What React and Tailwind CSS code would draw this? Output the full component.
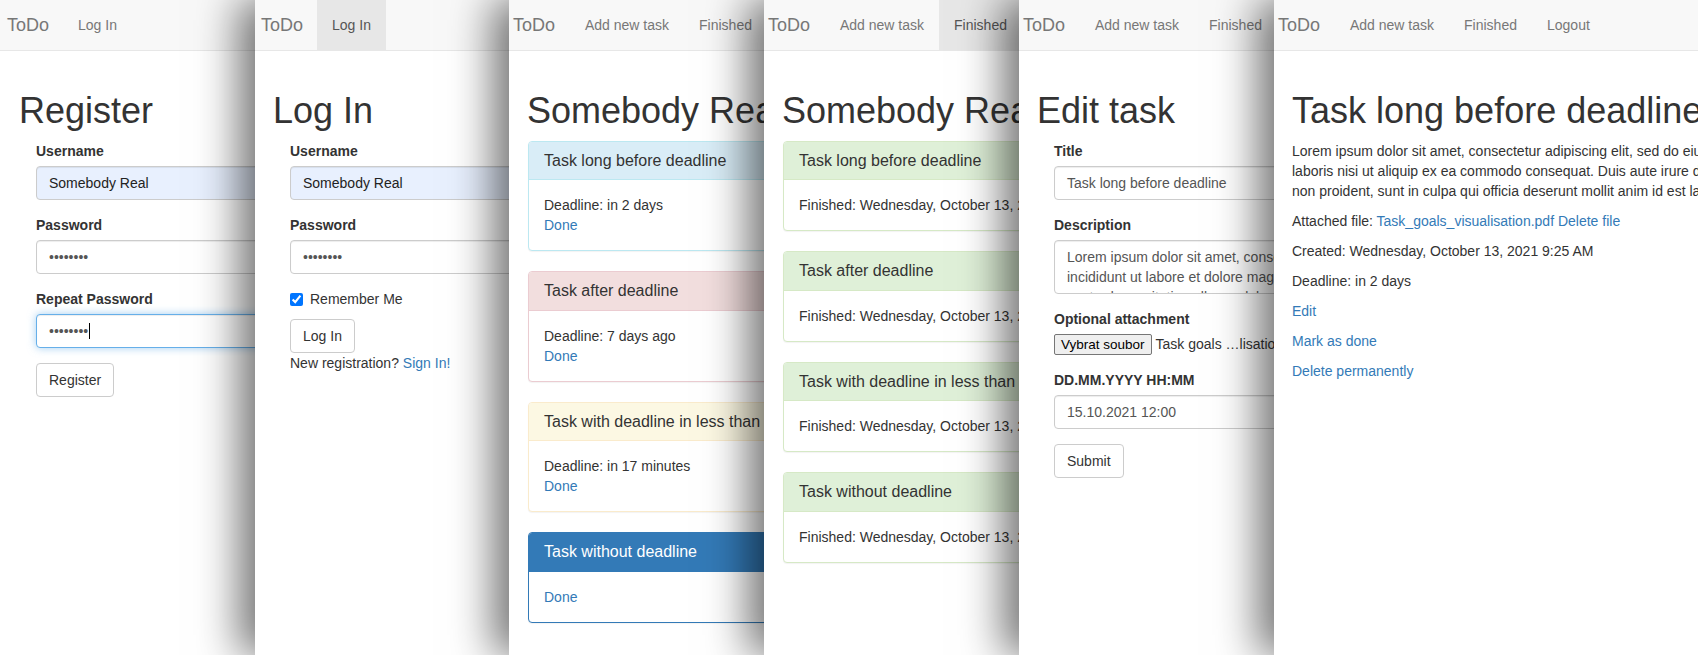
import { useState } from "react";

const shadow = "shadow-[-16px_0_40px_rgba(0,0,0,0.55)]";

const variants = {
  info: { box: "border-[#bce8f1]", head: "bg-[#d9edf7] border-[#bce8f1] text-[#333]" },
  danger: { box: "border-[#ebccd1]", head: "bg-[#f2dede] border-[#ebccd1] text-[#333]" },
  warning: { box: "border-[#faebcc]", head: "bg-[#fcf8e3] border-[#faebcc] text-[#333]" },
  primary: { box: "border-[#337ab7]", head: "bg-[#337ab7] border-[#337ab7] text-white" },
  success: { box: "border-[#d6e9c6]", head: "bg-[#dff0d8] border-[#d6e9c6] text-[#333]" },
};

function Navbar({ items, active, brand }) {
  return (
    <div className="flex h-[51px] w-[1100px] shrink-0 border-b border-[#e7e7e7] bg-[#f8f8f8] whitespace-nowrap">
      <div className={`${brand} shrink-0 pt-[15px] text-[18px] leading-5 text-[#777]`}>ToDo</div>
      {items.map((item) => (
        <div
          key={item}
          className={`px-[15px] pt-[15px] text-sm leading-5 ${
            item === active ? "bg-[#e7e7e7] text-[#555]" : "text-[#777]"
          }`}
        >
          {item}
        </div>
      ))}
    </div>
  );
}

function Panel({ width, first, children }) {
  return (
    <div className={`relative h-[655px] shrink-0 overflow-hidden bg-white ${width} ${first ? "" : shadow}`}>
      {children}
    </div>
  );
}

function Heading({ children }) {
  return (
    <h1 className="mb-[10px] whitespace-nowrap text-[36px] leading-[1.1] font-normal text-[#333]">{children}</h1>
  );
}

function Label({ children }) {
  return <div className="mb-[5px] text-sm leading-5 font-bold text-[#333] whitespace-nowrap">{children}</div>;
}

function Input({ children, tone = "plain" }) {
  const tones = {
    plain: "bg-white border-[#ccc] text-[#555] shadow-[inset_0_1px_1px_rgba(0,0,0,0.075)]",
    fill: "bg-[#e8f0fe] border-[#ccc] text-[#222] shadow-[inset_0_1px_1px_rgba(0,0,0,0.075)]",
    focus:
      "bg-white border-[#66afe9] text-[#555] shadow-[inset_0_1px_1px_rgba(0,0,0,0.075),0_0_8px_rgba(102,175,233,0.6)]",
  };
  return (
    <div className={`flex h-[34px] w-[700px] items-center rounded border px-3 text-sm whitespace-nowrap ${tones[tone]}`}>
      {children}
    </div>
  );
}

function Button({ children }) {
  return (
    <div className="inline-block rounded border border-[#ccc] bg-white px-3 py-[6px] text-sm leading-5 text-[#333]">
      {children}
    </div>
  );
}

function Card({ title, variant, children }) {
  const v = variants[variant];
  return (
    <div className={`mb-5 ml-[1px] w-[700px] rounded border bg-white shadow-[0_1px_1px_rgba(0,0,0,0.05)] ${v.box}`}>
      <div className={`rounded-t-[3px] border-b px-[15px] py-[10px] text-base leading-[1.1] whitespace-nowrap ${v.head}`}>
        {title}
      </div>
      <div className="p-[15px] text-sm leading-5 text-[#333] whitespace-nowrap">{children}</div>
    </div>
  );
}

const link = "text-[#337ab7]";
const dots = "••••••••";
const taskNav = ["Add new task", "Finished"];
const finished = "Finished: Wednesday, October 13, 2021 9:31 AM";

export default function App() {
  const [remember] = useState(true);
  return (
    <div className='flex h-[655px] w-[1698px] overflow-hidden bg-white font-["Liberation_Sans",Arial,sans-serif] text-[#333]'>
      <Panel width="w-[255px]" first>
        <Navbar items={["Log In"]} brand="pl-[7px] w-[63px]" />
        <div className="pl-[19px] pt-[40px]">
          <Heading>Register</Heading>
          <div className="pl-[17px]">
            <Label>Username</Label>
            <Input tone="fill">Somebody Real</Input>
            <div className="mt-[15px]">
              <Label>Password</Label>
              <Input>{dots}</Input>
            </div>
            <div className="mt-[15px]">
              <Label>Repeat Password</Label>
              <Input tone="focus">
                {dots}
                <span className="ml-[1px] inline-block h-[16px] w-px bg-black" />
              </Input>
            </div>
            <div className="mt-[15px]">
              <Button>Register</Button>
            </div>
          </div>
        </div>
      </Panel>

      <Panel width="w-[254px]">
        <Navbar items={["Log In"]} active="Log In" brand="pl-[6px] w-[62px]" />
        <div className="pl-[18px] pt-[40px]">
          <Heading>Log In</Heading>
          <div className="pl-[17px]">
            <Label>Username</Label>
            <Input tone="fill">Somebody Real</Input>
            <div className="mt-[15px]">
              <Label>Password</Label>
              <Input>{dots}</Input>
            </div>
            <div className="mt-[15px] flex h-5 text-sm leading-5 whitespace-nowrap">
              <input
                type="checkbox"
                defaultChecked={remember}
                className="m-0 mt-[4px] mr-[7px] h-[13px] w-[13px] accent-[#0075ff]"
              />
              Remember Me
            </div>
            <div className="mt-[10px]">
              <Button>Log In</Button>
            </div>
            <div className="text-sm leading-5 whitespace-nowrap">
              New registration? <span className={link}>Sign In!</span>
            </div>
          </div>
        </div>
      </Panel>

      <Panel width="w-[255px]">
        <Navbar items={taskNav} brand="pl-[4px] w-[61px]" />
        <div className="pl-[18px] pt-[40px]">
          <Heading>Somebody Real</Heading>
          <Card title="Task long before deadline" variant="info">
            <div>Deadline: in 2 days</div>
            <div className={link}>Done</div>
          </Card>
          <Card title="Task after deadline" variant="danger">
            <div>Deadline: 7 days ago</div>
            <div className={link}>Done</div>
          </Card>
          <Card title="Task with deadline in less than an hour" variant="warning">
            <div>Deadline: in 17 minutes</div>
            <div className={link}>Done</div>
          </Card>
          <Card title="Task without deadline" variant="primary">
            <div className={link}>Done</div>
          </Card>
        </div>
      </Panel>

      <Panel width="w-[255px]">
        <Navbar items={taskNav} active="Finished" brand="pl-[4px] w-[61px]" />
        <div className="pl-[18px] pt-[40px]">
          <Heading>Somebody Real</Heading>
          <Card title="Task long before deadline" variant="success">{finished}</Card>
          <Card title="Task after deadline" variant="success">{finished}</Card>
          <Card title="Task with deadline in less than an hour" variant="success">{finished}</Card>
          <Card title="Task without deadline" variant="success">{finished}</Card>
        </div>
      </Panel>

      <Panel width="w-[255px]">
        <Navbar items={taskNav} brand="pl-[4px] w-[61px]" />
        <div className="pl-[18px] pt-[40px]">
          <Heading>Edit task</Heading>
          <div className="pl-[17px]">
            <Label>Title</Label>
            <Input>Task long before deadline</Input>
            <div className="mt-[15px]">
              <Label>Description</Label>
              <div className="h-[54px] w-[700px] overflow-hidden rounded border border-[#ccc] px-3 py-[6px] text-sm leading-5 whitespace-nowrap text-[#555] shadow-[inset_0_1px_1px_rgba(0,0,0,0.075)]">
                <div>Lorem ipsum dolor sit amet, consectetur adipiscing elit, sed do eiusmod tempor</div>
                <div>incididunt ut labore et dolore magna aliqua. Ut enim ad minim veniam, quis</div>
                <div>nostrud exercitation ullamco laboris nisi ut aliquip ex ea commodo</div>
              </div>
            </div>
            <div className="mt-[15px]">
              <Label>Optional attachment</Label>
              <div className="flex h-[21px] items-center whitespace-nowrap text-[#333]">
                <div className="h-[21px] rounded-[2px] border border-[#767676] bg-[#efefef] px-[6px] text-[13.5px] leading-[19px] text-black">
                  Vybrat soubor
                </div>
                <span className="ml-[4px] text-sm">Task goals …lisation.pdf</span>
              </div>
            </div>
            <div className="mt-[15px]">
              <Label>DD.MM.YYYY HH:MM</Label>
              <Input>15.10.2021 12:00</Input>
            </div>
            <div className="mt-[15px]">
              <Button>Submit</Button>
            </div>
          </div>
        </div>
      </Panel>

      <Panel width="flex-1">
        <Navbar items={[...taskNav, "Logout"]} brand="pl-[4px] w-[61px]" />
        <div className="pl-[18px] pt-[40px] text-sm leading-5 whitespace-nowrap">
          <Heading>Task long before deadline</Heading>
          <div className="mb-[10px]">
            <div>
              Lorem ipsum dolor sit amet, consectetur adipiscing elit, sed do eiusmod tempor incididunt ut labore et
              dolore magna aliqua. Ut enim ad minim veniam, quis nostrud exercitation ullamco
            </div>
            <div>
              laboris nisi ut aliquip ex ea commodo consequat. Duis aute irure dolor in reprehenderit in voluptate velit
              esse cillum dolore eu fugiat nulla pariatur.
            </div>
            <div>non proident, sunt in culpa qui officia deserunt mollit anim id est laborum.</div>
          </div>
          <div className="mb-[10px]">
            Attached file: <span className={link}>Task_goals_visualisation.pdf</span>{" "}
            <span className={link}>Delete file</span>
          </div>
          <div className="mb-[10px]">Created: Wednesday, October 13, 2021 9:25 AM</div>
          <div className="mb-[10px]">Deadline: in 2 days</div>
          <div className={`mb-[10px] ${link}`}>Edit</div>
          <div className={`mb-[10px] ${link}`}>Mark as done</div>
          <div className={`mb-[10px] ${link}`}>Delete permanently</div>
        </div>
      </Panel>
    </div>
  );
}
